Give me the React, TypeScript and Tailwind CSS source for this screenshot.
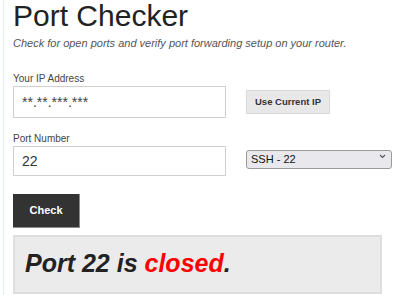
import React, { useState } from 'react';

const services = [
  { label: 'SSH - 22', port: '22' },
  { label: 'HTTP - 80', port: '80' },
  { label: 'HTTPS - 443', port: '443' },
  { label: 'FTP - 21', port: '21' },
];

export default function App() {
  const [port, setPort] = useState('22');

  return (
    <div className="flex min-h-[295px] bg-white font-['Liberation_Sans',Arial,sans-serif] text-[#222]">
      {/* faint page edge */}
      <div className="ml-[3px] w-px bg-[#e4eee4]" />
      <div className="w-[378px] pl-[9px]">
        <h1 className="mt-px text-[30px] leading-[30px] font-normal text-[#222]">Port Checker</h1>
        <p className="mt-[5px] text-[11px] leading-[14px] italic text-[#555]">
          Check for open ports and verify port forwarding setup on your router.
        </p>

        {/* IP row */}
        <div className="mt-[22px] grid grid-cols-[213px_1fr] gap-x-[20px]">
          <label className="text-[10px] leading-[13px] text-[#444]">Your IP Address</label>
          <div />
          <input
            readOnly
            value="**.**.***.***"
            className="mt-px h-[32px] w-full border border-[#d0d0d0] px-[8px] text-[14px] text-[#444] outline-none"
          />
          <div className="mt-px flex items-center">
            <button className="h-[24px] w-[84px] border border-[#dadada] bg-[#e8e8e8] text-[9.5px] font-bold text-[#333]">
              Use Current IP
            </button>
          </div>
        </div>

        {/* Port row */}
        <div className="mt-[14px] grid grid-cols-[213px_1fr] gap-x-[20px]">
          <label className="text-[10px] leading-[13px] text-[#444]">Port Number</label>
          <div />
          <input
            value={port}
            onChange={(e) => setPort(e.target.value)}
            className="mt-px h-[30px] w-full border border-[#d0d0d0] px-[8px] text-[14px] text-[#333] outline-none"
          />
          <div className="relative mt-px h-[19px] w-[146px]">
            <select
              value={port}
              onChange={(e) => setPort(e.target.value)}
              className="h-full w-full appearance-none rounded-[3px] border border-[#9a9a9a] bg-[#e9e9ed] pl-[4px] text-[11px] text-[#111] outline-none"
            >
              {services.map((s) => (
                <option key={s.port} value={s.port}>
                  {s.label}
                </option>
              ))}
            </select>
            <svg
              className="pointer-events-none absolute right-[6px] top-[8px]"
              width="7"
              height="5"
              viewBox="0 0 7 5"
              fill="none"
              stroke="#555"
              strokeWidth="1.1"
            >
              <path d="M1 1l2.5 2.5L6 1" />
            </svg>
          </div>
        </div>

        <button className="mt-[18px] h-[34px] w-[67px] border-r border-b border-[#8a8a8a] bg-[#333] text-[11px] font-bold text-white">
          Check
        </button>

        <div className="mt-[7px] border-2 border-[#dedede] bg-[#ebebeb] pt-[11px] pb-[14px] pl-[10px]">
          <p className="text-[25px] leading-[30px] font-bold italic text-[#222]">
            Port {port} is <span className="text-[#ff0000]">closed</span>.
          </p>
        </div>
      </div>
    </div>
  );
}
